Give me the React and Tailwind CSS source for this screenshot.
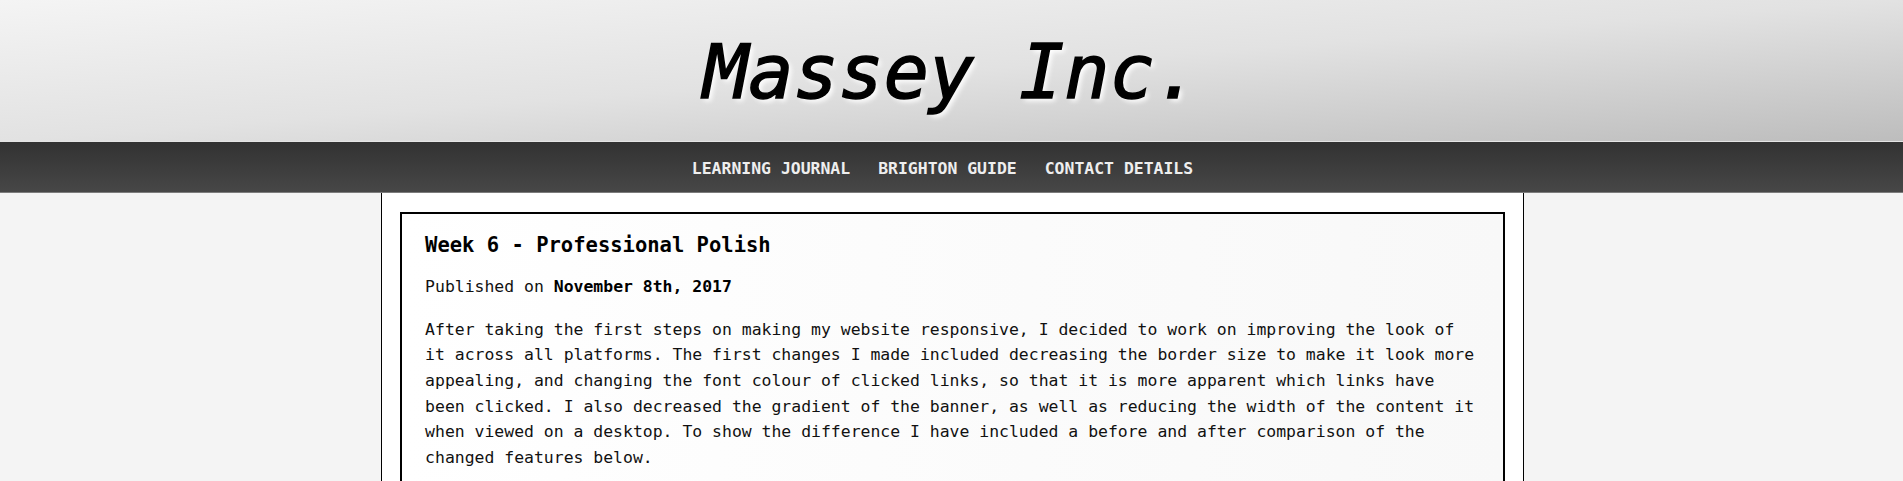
export default function App() {
  const mono = { fontFamily: '"DejaVu Sans Mono", "Liberation Mono", monospace' };
  return (
    <div className="min-h-screen bg-[#f4f4f4]" style={mono}>
      <header className="h-[142px] flex items-center justify-center border-b border-[#e4e4e4] bg-[linear-gradient(to_bottom_right,#f4f4f4_0%,#e2e2e2_50%,#bdbdbd_100%)]">
        <h1 className="italic text-[75px] leading-none text-black [-webkit-text-stroke:1.5px_black] [text-shadow:3px_3px_5px_#ffffff] pt-[4px]">
          Massey Inc.
        </h1>
      </header>
      <nav className="h-[51px] flex items-center justify-center gap-[28px] pr-[18px] pt-[4px] border-b border-[#7c7c7c] bg-[linear-gradient(to_bottom,#323232,#474747)]">
        <a className="text-[16.44px] font-bold text-[#eeeeee] leading-none">LEARNING JOURNAL</a>
        <a className="text-[16.44px] font-bold text-[#eeeeee] leading-none">BRIGHTON GUIDE</a>
        <a className="text-[16.44px] font-bold text-[#eeeeee] leading-none">CONTACT DETAILS</a>
      </nav>
      <main className="w-[calc(60%+2px)] ml-[20%] bg-white border-x border-black min-h-[600px] pt-[19px] px-[18.5px]">
        <article className="border-2 border-black bg-[linear-gradient(to_right,#ffffff,#f8f8f8)] pt-[18px] px-[23px] min-h-[500px] text-[#111111]">
          <h2 className="text-[20.5px] font-bold leading-[26px] text-black">Week 6 - Professional Polish</h2>
          <p className="mt-[16px] text-[16.44px] leading-[25.67px]">
            Published on <span className="font-bold text-black">November 8th, 2017</span>
          </p>
          <p className="mt-[17px] text-[16.44px] leading-[25.67px]">
            After taking the first steps on making my website responsive, I decided to work on improving the look of it across all platforms. The first changes I made included decreasing the border size to make it look more appealing, and changing the font colour of clicked links, so that it is more apparent which links have been clicked. I also decreased the gradient of the banner, as well as reducing the width of the content it when viewed on a desktop. To show the difference I have included a before and after comparison of the changed features below.
          </p>
        </article>
      </main>
    </div>
  );
}
